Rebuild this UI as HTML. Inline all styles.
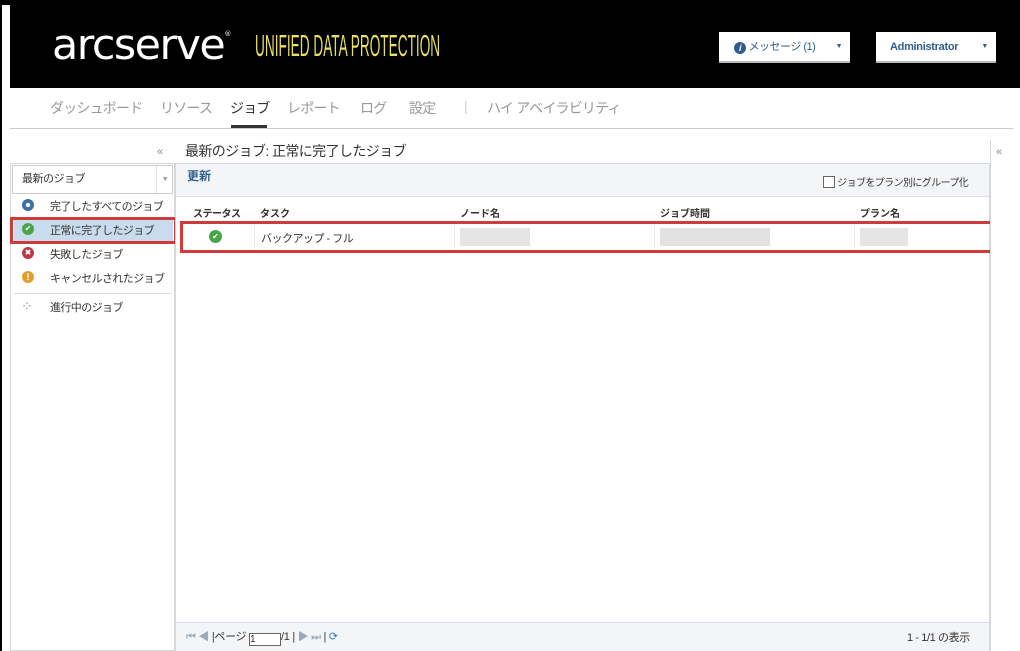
<!DOCTYPE html>
<html><head><meta charset="utf-8"><style>
*{box-sizing:border-box;margin:0;padding:0}
body{width:1020px;height:651px;overflow:hidden;background:#fff;font-family:"Liberation Sans","Noto Sans CJK JP",sans-serif;position:relative;font-size:12px;color:#333}
.a{position:absolute;white-space:nowrap}
.nav{position:absolute;top:98px;font-size:14px;color:#999;letter-spacing:-0.8px}
.ic{position:absolute;left:22px;width:12px;height:12px;border-radius:50%;color:#fff;font-size:8px;line-height:12px;text-align:center}
.li{position:absolute;left:50px;font-size:11px;letter-spacing:-0.6px}
</style></head><body>
<div class="a" style="left:0;top:0;width:1020px;height:5px;background:#000"></div>
<div class="a" style="left:0;top:0;width:2px;height:651px;background:#000"></div>
<div class="a" style="left:10px;top:4px;width:1010px;height:84px;background:#000"></div>
<div class="a" style="left:52px;top:20px;color:#fff;font-size:42px;font-family:'DejaVu Sans','Liberation Sans',sans-serif;letter-spacing:-1.5px;line-height:50px;transform:scaleX(1.02);transform-origin:left">arcserve<span style="font-size:7px;vertical-align:top;line-height:28px">®</span></div>
<div class="a" style="left:255px;top:29px;color:#e8df63;font-size:31px;font-family:'Liberation Sans',sans-serif;transform:scaleX(0.44);transform-origin:left;line-height:34px">UNIFIED DATA PROTECTION</div>
<div class="a" style="left:719px;top:32px;width:131px;height:31px;background:#fff;border-bottom:2px solid #bbb;color:#2e5f8e;font-size:11px;line-height:30px;padding-left:15px;letter-spacing:-0.5px"><span style="display:inline-block;width:12px;height:12px;border-radius:50%;background:#2e5f8e;color:#fff;font-size:9px;line-height:12px;text-align:center;font-weight:bold;font-style:italic;vertical-align:-1px">i</span> メッセージ (1)<span style="position:absolute;right:8px;font-size:7px">▼</span></div>
<div class="a" style="left:876px;top:32px;width:120px;height:31px;background:#fff;border-bottom:2px solid #bbb;color:#2e5f8e;font-size:11px;font-weight:bold;line-height:30px;padding-left:14px;letter-spacing:-0.3px">Administrator<span style="position:absolute;right:8px;font-size:7px">▼</span></div>
<div class="nav" style="left:50px">ダッシュボード</div>
<div class="nav" style="left:160px">リソース</div>
<div class="nav" style="left:230px;color:#333">ジョブ</div>
<div class="nav" style="left:287px">レポート</div>
<div class="nav" style="left:360px">ログ</div>
<div class="nav" style="left:409px">設定</div>
<div class="nav" style="left:464px;color:#ccc">|</div>
<div class="nav" style="left:487px">ハイ アベイラビリティ</div>
<div class="a" style="left:231px;top:125px;width:36px;height:3px;background:#333"></div>
<div class="a" style="left:10px;top:128px;width:1003px;height:1px;background:#ccc"></div>
<div class="a" style="left:157px;top:146px;color:#888;font-size:11px">«</div>
<div class="a" style="left:10px;top:163px;width:165px;height:488px;border:1px solid #d5d8dd;background:#fff"></div>
<div class="a" style="left:12px;top:165px;width:161px;height:29px;border:1px solid #ccc;font-size:11px;line-height:27px;padding-left:9px;letter-spacing:-0.5px">最新のジョブ<span style="position:absolute;left:143px;top:0;width:17px;height:27px;border-left:1px solid #ddd;color:#999;font-size:7px;text-align:center">▼</span></div>
<div class="a" style="left:14px;top:219px;width:159px;height:22px;background:#c8dcee"></div>
<div class="a" style="left:10px;top:217px;width:167px;height:27px;border:3px solid #d03a3a"></div>
<div class="ic" style="top:199px;background:#fff;border:3px solid #3b6fa8;box-shadow:inset 0 0 0 1px #3b6fa8"></div>
<div class="li" style="top:198px">完了したすべてのジョブ</div>
<div class="ic" style="top:223px;background:#4aa548">✔</div>
<div class="li" style="top:222px">正常に完了したジョブ</div>
<div class="ic" style="top:247px;background:#b73a46">✖</div>
<div class="li" style="top:246px">失敗したジョブ</div>
<div class="ic" style="top:271px;background:#e0a030;font-size:9px;font-weight:bold">!</div>
<div class="li" style="top:270px">キャンセルされたジョブ</div>
<div class="a" style="left:14px;top:293px;width:158px;height:1px;background:#ddd"></div>
<div class="a" style="left:21px;top:298px;color:#999;font-size:14px;line-height:16px">⁘</div>
<div class="li" style="top:299px">進行中のジョブ</div>
<div class="a" style="left:185px;top:141px;font-size:14px;color:#333;letter-spacing:-0.6px">最新のジョブ: 正常に完了したジョブ</div>
<div class="a" style="left:175px;top:163px;width:815px;height:488px;border:1px solid #d5d8dd;background:#fff"></div>
<div class="a" style="left:176px;top:164px;width:813px;height:33px;background:#f4f5f7;border-bottom:1px solid #dde"></div>
<div class="a" style="left:187px;top:167px;color:#2e5f8e;font-weight:bold;font-size:12px">更新</div>
<div class="a" style="left:823px;top:174px;font-size:10px;letter-spacing:-0.6px"><span style="display:inline-block;width:12px;height:12px;border:1px solid #666;background:#fff;vertical-align:-2px"></span> ジョブをプラン別にグループ化</div>
<div class="a" style="left:193px;top:205px;font-size:10px;font-weight:bold;letter-spacing:-0.5px">ステータス</div>
<div class="a" style="left:260px;top:205px;font-size:10px;font-weight:bold">タスク</div>
<div class="a" style="left:460px;top:205px;font-size:10px;font-weight:bold">ノード名</div>
<div class="a" style="left:660px;top:205px;font-size:10px;font-weight:bold">ジョブ時間</div>
<div class="a" style="left:860px;top:205px;font-size:10px;font-weight:bold">プラン名</div>
<div class="a" style="left:180px;top:221px;width:813px;height:32px;border:3px solid #d03a3a"></div>
<div class="a" style="left:254px;top:225px;width:1px;height:24px;background:#eee"></div>
<div class="a" style="left:454px;top:225px;width:1px;height:24px;background:#eee"></div>
<div class="a" style="left:654px;top:225px;width:1px;height:24px;background:#eee"></div>
<div class="a" style="left:854px;top:225px;width:1px;height:24px;background:#eee"></div>
<div class="a" style="left:209px;top:230px;width:13px;height:13px;border-radius:50%;background:#4aa548;color:#fff;font-size:8px;line-height:13px;text-align:center">✔</div>
<div class="a" style="left:261px;top:230px;font-size:11px;letter-spacing:-0.5px">バックアップ - フル</div>
<div class="a" style="left:460px;top:228px;width:70px;height:18px;background:#e4e4e4"></div>
<div class="a" style="left:660px;top:228px;width:110px;height:18px;background:#e2e2e2"></div>
<div class="a" style="left:860px;top:228px;width:48px;height:18px;background:#e4e4e4"></div>
<div class="a" style="left:176px;top:622px;width:813px;height:29px;background:#f4f5f7;border-top:1px solid #dde"></div>
<div class="a" style="left:186px;top:628px;font-size:11px;color:#9ab;letter-spacing:-0.3px">⏮ ◀ <span style="color:#333">|ページ</span> <span style="display:inline-block;width:32px;height:13px;border:1px solid #666;background:#fff;color:#333;vertical-align:-2px;font-size:10px;line-height:11px">1</span><span style="color:#333">/1 |</span> ▶ ⏭ <span style="color:#333">|</span> <span style="color:#3b78c4">⟳</span></div>
<div class="a" style="left:907px;top:629px;font-size:11px;letter-spacing:-0.4px">1 - 1/1 の表示</div>
<div class="a" style="left:990px;top:140px;width:30px;height:511px;border-left:1px solid #d5d8dd;background:#fff"></div>
<div class="a" style="left:996px;top:146px;color:#888;font-size:11px">«</div>
</body></html>
